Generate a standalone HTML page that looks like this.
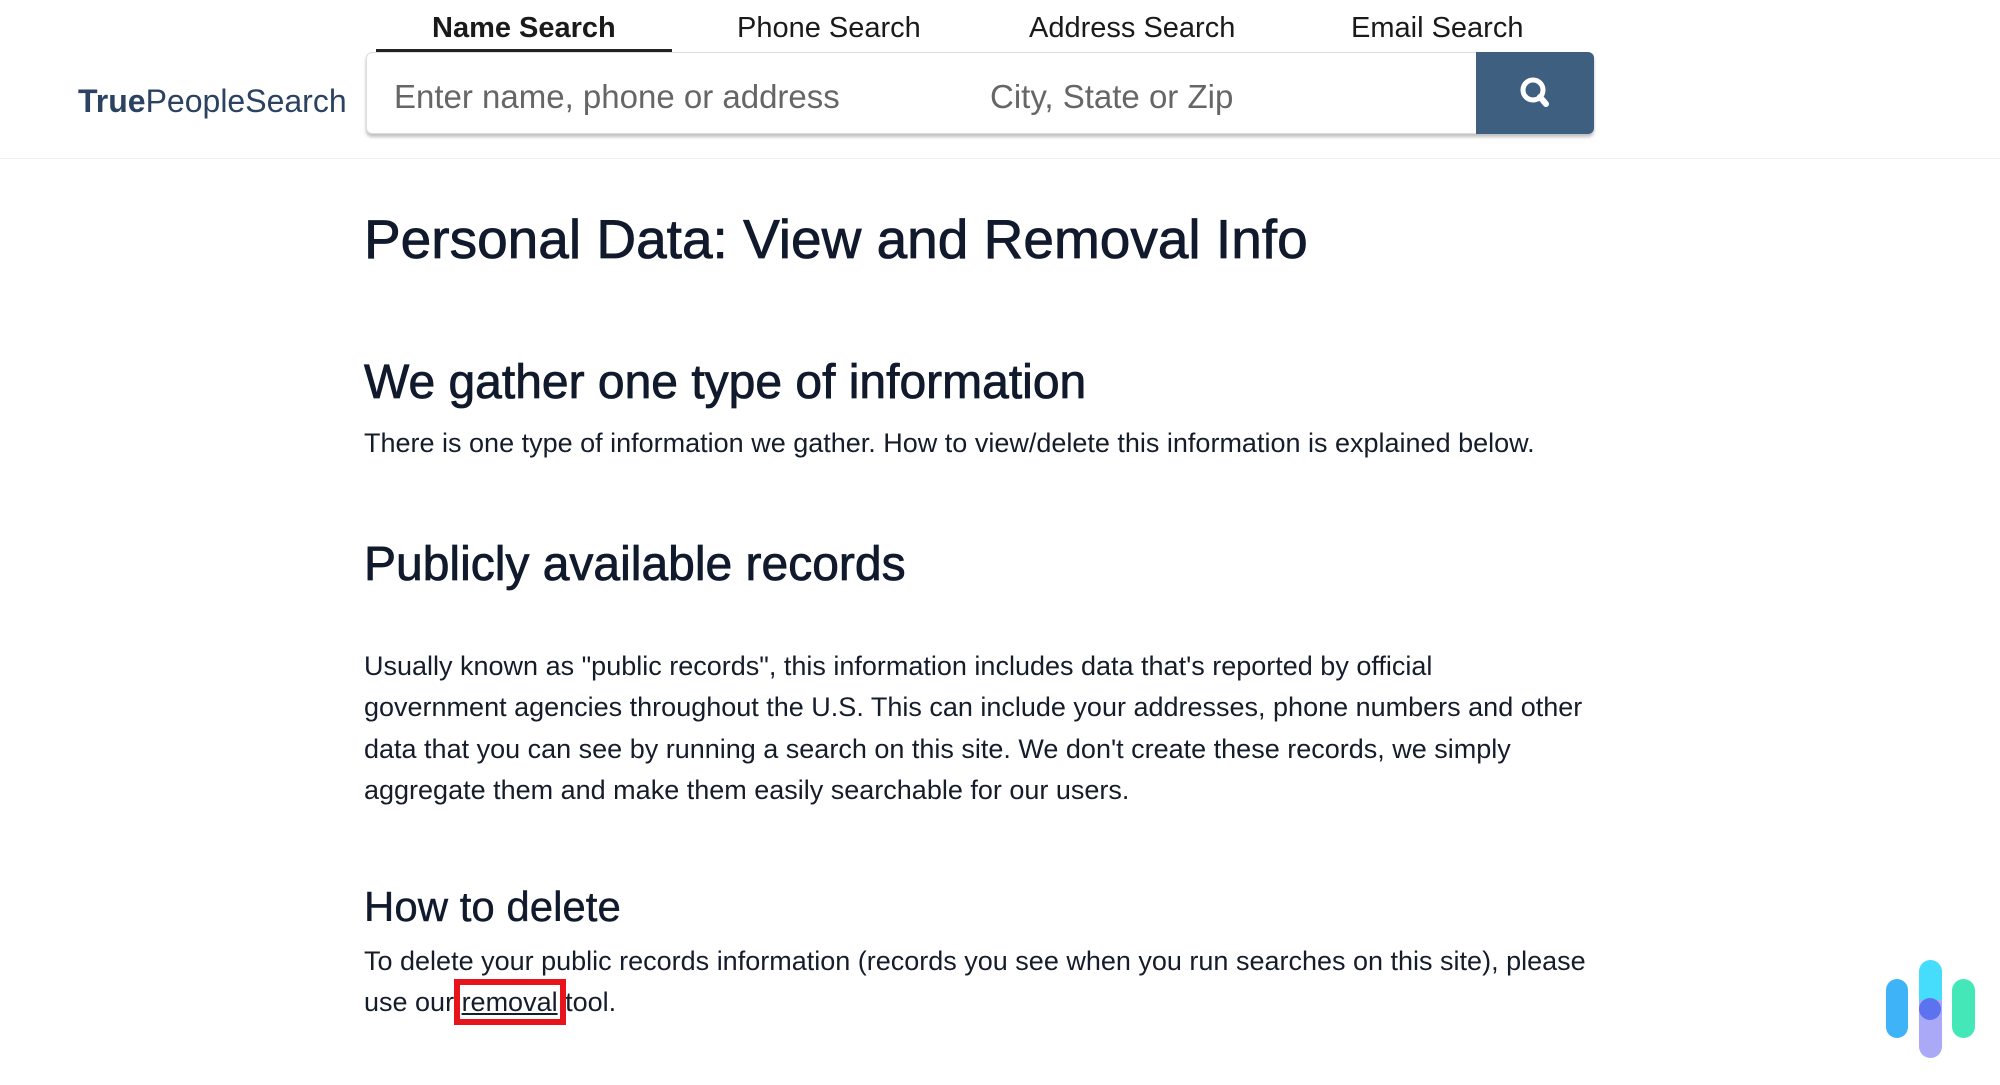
<!DOCTYPE html>
<html><head><meta charset="utf-8"><style>
*{margin:0;padding:0;box-sizing:border-box}
body{width:2000px;height:1085px;background:#fff;font-family:"Liberation Sans",sans-serif;color:#101a2c;position:relative;overflow:hidden}
.a{position:absolute;white-space:nowrap;line-height:1}
.tab{font-size:29px;top:14px;color:#1a1a1a}
.box{position:absolute;left:366px;top:52px;width:1228px;height:82px;border:1px solid #ddd;border-radius:6px;box-shadow:0 3px 3px rgba(0,0,0,.25);background:#fff}
.btn{position:absolute;left:1476px;top:52px;width:118px;height:82px;background:#3f5f80;border-radius:0 6px 6px 0}
.ph{font-size:33px;color:#666;top:80px}
p.a{font-size:27px;color:#151c2a}
.h{-webkit-text-stroke:0.8px #101a2c}
</style></head><body>
<div class="a tab" style="left:432px;font-weight:bold">Name Search</div>
<div style="position:absolute;left:376px;top:49px;width:296px;height:3px;background:#222"></div>
<div class="a tab" style="left:737px">Phone Search</div>
<div class="a tab" style="left:1029px">Address Search</div>
<div class="a tab" style="left:1351px">Email Search</div>
<div class="a" style="left:78px;top:85px;font-size:32px;color:#2b4261"><b>True</b>PeopleSearch</div>
<div class="box"></div>
<div class="btn"><svg width="118" height="82" viewBox="0 0 118 82"><circle cx="57" cy="38" r="10" fill="none" stroke="#fff" stroke-width="5"/><line x1="64" y1="45" x2="70" y2="52" stroke="#fff" stroke-width="6" stroke-linecap="round"/></svg></div>
<div class="a ph" style="left:394px">Enter name, phone or address</div>
<div class="a ph" style="left:990px">City, State or Zip</div>
<div style="position:absolute;left:0;top:158px;width:2000px;height:1px;background:#eee"></div>
<div class="a h" style="left:364px;top:212px;font-size:55px">Personal Data: View and Removal Info</div>
<div class="a h" style="left:364px;top:359px;font-size:48px">We gather one type of information</div>
<p class="a" style="left:364px;top:430px">There is one type of information we gather. How to view/delete this information is explained below.</p>
<div class="a h" style="left:364px;top:541px;font-size:48px">Publicly available records</div>
<p class="a" style="left:364px;top:646px;line-height:41.3px;white-space:normal;width:1300px">Usually known as "public records", this information includes data that's reported by official<br>government agencies throughout the U.S. This can include your addresses, phone numbers and other<br>data that you can see by running a search on this site. We don't create these records, we simply<br>aggregate them and make them easily searchable for our users.</p>
<div class="a h" style="left:364px;top:886px;font-size:42px;-webkit-text-stroke:0.4px #101a2c">How to delete</div>
<p class="a" style="left:364px;top:941px;line-height:41px;white-space:normal;width:1300px">To delete your public records information (records you see when you run searches on this site), please<br>use our <span style="text-decoration:underline;outline:6px solid #e8141c;outline-offset:2px">removal</span> tool.</p>
<svg style="position:absolute;left:1880px;top:955px" width="100" height="110">
<rect x="6" y="24" width="22" height="59" rx="11" fill="#3fb3f7"/>
<rect x="72" y="24" width="23" height="59" rx="11.5" fill="#44e8b8"/>
<rect x="39" y="5" width="23" height="60" rx="11.5" fill="#46dcfb"/>
<rect x="39" y="45" width="23" height="58" rx="11.5" fill="#a9a9f7"/>
<rect x="39" y="45" width="23" height="15" fill="#a9a9f7"/>
<circle cx="50" cy="54" r="11" fill="#5d72ee"/>
</svg>
</body></html>
